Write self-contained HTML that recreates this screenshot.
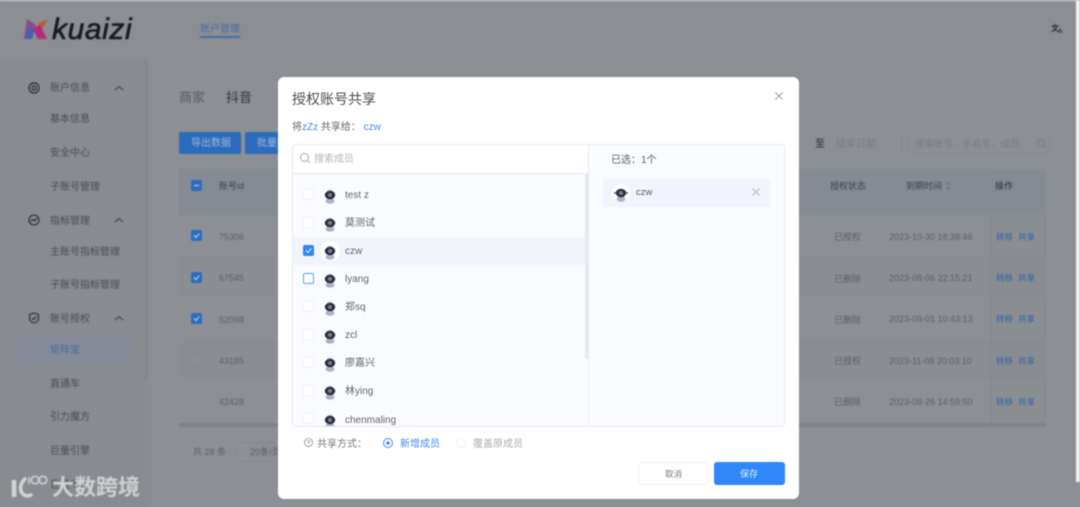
<!DOCTYPE html>
<html lang="zh"><head><meta charset="utf-8"><title>授权账号共享</title>
<style>
*{box-sizing:border-box}
html,body{margin:0;padding:0;width:1080px;height:507px;overflow:hidden;background:#8b8f93}
body{position:relative;font-family:"Liberation Sans","Noto Sans CJK SC",sans-serif}
.a{position:absolute}
.t{position:absolute;white-space:nowrap;line-height:14px;font-size:10px;color:#484c50}
#bg{position:absolute;left:0;top:0;width:1080px;height:507px;filter:blur(.7px)}
#dlg{position:absolute;left:278px;top:77px;width:521px;height:422px;background:#fff;border-radius:6px;filter:blur(.5px)}
#dlg .t{color:#62666c}
.cb{position:absolute;width:10px;height:10px;border:1px solid #868b8f;background:#8c9094;border-radius:2px}
.cbb{position:absolute;left:191px;width:11px;height:11px;background:#2b6cbd;border-radius:2px}
.op{color:#2e5fa8!important}
.g{color:#5a5e62!important}
.d .cb2{position:absolute;left:25px;width:11px;height:11px;border:1px solid #eef0f3;background:#fff;border-radius:2px}
svg{position:absolute;overflow:visible}
</style></head><body>
<div id="bg">
<div class="a" style="left:0;top:0;width:1080px;height:1px;background:#dfe0e1"></div>
<div class="a" style="left:1076px;top:0;width:4px;height:482px;background:#f2f2f2"></div>
<div class="a" style="left:0;top:59px;width:145px;height:448px;background:#888c90"></div>
<div class="a" style="left:145px;top:59px;width:3px;height:322px;background:#83878b"></div>
<div class="a" style="left:163px;top:73px;width:903px;height:434px;background:#8c9094;border-radius:8px"></div>

<!-- logo -->
<svg style="left:24px;top:18px" width="24" height="22" viewBox="0 0 24 22">
<path d="M3 1L12 7L10 13L0 21Z" fill="#8f4a86"/><path d="M0 21L4 9L11 11L8 21Z" fill="#4a5fb0"/><path d="M9 11L24 1L18 11L23 21L14 21Z" fill="#b52a7c"/><path d="M14 5L24 1L18 10Z" fill="#b8602e"/>
</svg>
<div class="t" style="left:52px;top:14px;line-height:32px;font-size:30px;font-style:italic;color:#16191d;letter-spacing:.6px;-webkit-text-stroke:.6px #16191d">kuaizi</div>

<div class="t" style="left:200px;top:23px;font-size:10px;color:#3f6cab">账户管理</div>
<div class="a" style="left:200px;top:36px;width:40px;height:2px;background:#3f6cab"></div>
<div class="t" style="left:1051px;top:22px;font-size:8px;color:#26292c;font-weight:bold">文<span style="font-size:6px;position:relative;top:2px;left:-1px">A</span></div>

<!-- sidebar -->
<svg style="left:28px;top:82px" width="12" height="12" viewBox="0 0 12 12" fill="none" stroke="#23262a"><circle cx="6" cy="6" r="5" stroke-width="1.2"/><circle cx="6" cy="6" r="2" stroke-width="1.2"/></svg>
<div class="t" style="left:50px;top:82px">账户信息</div>
<svg style="left:114px;top:85px" width="10" height="6" fill="none" stroke="#33373a"><path d="M1 5L5 1.5L9 5"/></svg>
<div class="t" style="left:50px;top:113px">基本信息</div>
<div class="t" style="left:50px;top:147px">安全中心</div>
<div class="t" style="left:50px;top:181px">子账号管理</div>
<svg style="left:28px;top:214px" width="12" height="12" viewBox="0 0 12 12" fill="none" stroke="#23262a" stroke-width="1.1"><circle cx="6" cy="6" r="5"/><path d="M3 7L5 5.5L6.5 6.8L9 4"/></svg>
<div class="t" style="left:50px;top:215px">指标管理</div>
<svg style="left:114px;top:217px" width="10" height="6" fill="none" stroke="#33373a"><path d="M1 5L5 1.5L9 5"/></svg>
<div class="t" style="left:50px;top:246px">主账号指标管理</div>
<div class="t" style="left:50px;top:279px">子账号指标管理</div>
<svg style="left:28px;top:312px" width="12" height="12" viewBox="0 0 12 12" fill="none" stroke="#23262a" stroke-width="1.1"><path d="M6 1L10.500 2.500V6.500C10.500 9 8 10.500 6 11C4 10.500 1.500 9 1.500 6.500V2.500Z"/><path d="M3.800 6L5.500 7.500L8.200 4.500"/></svg>
<div class="t" style="left:50px;top:313px">账号授权</div>
<svg style="left:114px;top:315px" width="10" height="6" fill="none" stroke="#33373a"><path d="M1 5L5 1.5L9 5"/></svg>
<div class="a" style="left:14px;top:334px;width:117px;height:31px;background:#858b96;border-radius:6px"></div>
<div class="t" style="left:50px;top:344px;color:#3f6cab">矩阵宝</div>
<div class="t" style="left:50px;top:378px">直通车</div>
<div class="t" style="left:50px;top:411px">引力魔方</div>
<div class="t" style="left:50px;top:445px">巨量引擎</div>
<div class="t" style="left:50px;top:479px">巨量千川</div>

<!-- content -->
<div class="t" style="left:179px;top:90px;font-size:13px;line-height:16px;color:#565a5e">商家</div>
<div class="t" style="left:226px;top:90px;font-size:13px;line-height:16px;color:#2e3135">抖音</div>
<div class="a" style="left:179px;top:132px;width:62px;height:22px;background:#2b6cbd;border-radius:2px"></div>
<div class="t" style="left:191px;top:137px;color:#a3b9d6">导出数据</div>
<div class="a" style="left:245px;top:132px;width:40px;height:22px;background:#2b6cbd;border-radius:2px"></div>
<div class="t" style="left:257px;top:137px;color:#a3b9d6">批量操作</div>
<div class="a" style="left:179px;top:169px;width:867px;height:46px;background:#858b93"></div>
<div class="cbb" style="top:180px"></div><div class="a" style="left:194px;top:185px;width:5px;height:1px;background:#cfe0f5"></div>
<div class="t" style="left:219px;top:179px;font-size:9px;color:#3d4145">账号id</div>
<div class="a" style="left:179px;top:256px;width:867px;height:41px;background:#8a8e92"></div>
<div class="a" style="left:179px;top:339px;width:867px;height:41px;background:#8a8e92"></div>
<div class="a" style="left:179px;top:423px;width:867px;height:4px;background:#7f8387"></div>
<svg style="left:191px;top:230px" width="11" height="11"><rect width="11" height="11" rx="2" fill="#2b6cbd"/><path d="M3 5.500L5 7.500L8.200 3.500" fill="none" stroke="#cfe0f5"/></svg>
<svg style="left:191px;top:272px" width="11" height="11"><rect width="11" height="11" rx="2" fill="#2b6cbd"/><path d="M3 5.500L5 7.500L8.200 3.500" fill="none" stroke="#cfe0f5"/></svg>
<svg style="left:191px;top:313px" width="11" height="11"><rect width="11" height="11" rx="2" fill="#2b6cbd"/><path d="M3 5.500L5 7.500L8.200 3.500" fill="none" stroke="#cfe0f5"/></svg>
<div class="cb" style="left:191px;top:355px"></div><div class="cb" style="left:191px;top:396px"></div>
<div class="t g" style="left:219px;top:230px;font-size:9px">75306</div>
<div class="t g" style="left:219px;top:271px;font-size:9px">67545</div>
<div class="t g" style="left:219px;top:313px;font-size:9px">52098</div>
<div class="t g" style="left:219px;top:354px;font-size:9px">43185</div>
<div class="t g" style="left:219px;top:395px;font-size:9px">42428</div>
<div class="t g" style="left:193px;top:445px;font-size:9px">共 28 条</div>
<div class="a" style="left:236px;top:442px;width:42px;height:20px;border:1px solid #85898d;border-radius:3px"></div>
<div class="t g" style="left:250px;top:445px;font-size:9px">20条/页</div>

<div class="t" style="left:815px;top:138px;font-size:10px;color:#23262a">至</div>
<div class="t" style="left:836px;top:138px;color:#777b7f">结束日期</div>
<div class="a" style="left:901px;top:133px;width:1px;height:20px;background:#84888c"></div>
<div class="a" style="left:908px;top:133px;width:141px;height:21px;border:1px solid #878b8f;border-radius:3px"></div>
<div class="t" style="left:915px;top:138px;font-size:9.500px;color:#777b7f">搜索账号、手机号、成员</div>
<svg style="left:1037px;top:139px" width="9" height="9" fill="none" stroke="#777b7f"><circle cx="4" cy="4" r="3.500"/><path d="M6.500 6.500L8.500 8.500"/></svg>

<div class="t" style="left:830px;top:179px;font-size:9px;color:#3d4145">授权状态</div>
<div class="t" style="left:906px;top:179px;font-size:9px;color:#3d4145">到期时间</div>
<svg style="left:945px;top:181px" width="7" height="10"><path d="M3.500 0L6.500 4H.5Z M3.500 10L6.500 6H.5Z" fill="#777b7f"/></svg>
<div class="a" style="left:990px;top:169px;width:56px;height:257px;background:rgba(130,134,140,.2);border-left:1px solid #85898d;border-right:1px solid #85898d;border-bottom:1px solid #85898d"></div>
<div class="t" style="left:995px;top:179px;font-size:9px;color:#2d3034">操作</div>

<div class="t g" style="left:834px;top:230px;font-size:9px">已授权</div><div class="t g" style="left:889px;top:230px;font-size:9px">2023-10-30 18:38:46</div>
<div class="t g" style="left:834px;top:272px;font-size:9px">已删除</div><div class="t g" style="left:889px;top:271px;font-size:9px">2023-08-06 22:15:21</div>
<div class="t g" style="left:834px;top:313px;font-size:9px">已删除</div><div class="t g" style="left:889px;top:312px;font-size:9px">2023-09-01 10:43:13</div>
<div class="t g" style="left:834px;top:354px;font-size:9px">已授权</div><div class="t g" style="left:889px;top:354px;font-size:9px">2023-11-08 20:03:10</div>
<div class="t g" style="left:834px;top:395px;font-size:9px">已删除</div><div class="t g" style="left:889px;top:395px;font-size:9px">2023-08-26 14:59:50</div>
<div class="t op" style="left:996px;top:230px;font-size:8.500px">转移</div><div class="t op" style="left:1018px;top:230px;font-size:8.500px">共享</div>
<div class="t op" style="left:996px;top:271px;font-size:8.500px">转移</div><div class="t op" style="left:1018px;top:271px;font-size:8.500px">共享</div>
<div class="t op" style="left:996px;top:312px;font-size:8.500px">转移</div><div class="t op" style="left:1018px;top:312px;font-size:8.500px">共享</div>
<div class="t op" style="left:996px;top:354px;font-size:8.500px">转移</div><div class="t op" style="left:1018px;top:354px;font-size:8.500px">共享</div>
<div class="t op" style="left:996px;top:395px;font-size:8.500px">转移</div><div class="t op" style="left:1018px;top:395px;font-size:8.500px">共享</div>

<!-- watermark -->
<svg style="left:9px;top:472px" width="42" height="28" viewBox="0 0 42 28" fill="none" stroke="#d3d4d5"><path d="M5 8V25" stroke-width="4.500"/><path d="M17 6C11 11 10 18 14 22C17 25 21 24 23 22" stroke-width="3.500"/><path d="M20 5V12" stroke-width="1.500"/><circle cx="26" cy="8" r="3.800" stroke-width="1.500"/><circle cx="34" cy="8" r="3.800" stroke-width="1.500"/></svg>
<div class="t" style="left:52px;top:476px;font-size:22px;line-height:24px;color:#d0d1d2;font-weight:bold">大数跨境</div>
</div>

<div id="dlg" class="d">
<div class="t" style="left:14px;top:14px;font-size:14px;line-height:17px;color:#4a4e54">授权账号共享</div>
<svg style="left:497px;top:15px" width="8" height="8" fill="none" stroke="#9a9da1"><path d="M.5 .5L7.500 7.500M7.500 .5L.5 7.500"/></svg>
<div class="t" style="left:14px;top:44px;font-size:10px">将<span style="color:#3f8bf0">zZz</span> 共享给： <span style="color:#3f8bf0">czw</span></div>

<div class="a" style="left:14px;top:67px;width:493px;height:283px;border:1px solid #e9ebef;border-radius:3px;background:#fafbfe"></div>
<div class="a" style="left:15px;top:68px;width:295px;height:29px;background:#fff;border-bottom:1px solid #e9ebef"></div>
<div class="a" style="left:310px;top:68px;width:1px;height:281px;background:#e9ebef"></div>
<div class="a" style="left:307px;top:97px;width:4px;height:185px;background:#e8e9ec"></div>
<svg style="left:22px;top:76px" width="10" height="10" fill="none" stroke="#a9acb0"><circle cx="4.500" cy="4.500" r="4"/><path d="M7.500 7.500L9.500 9.500"/></svg>
<div class="t" style="left:36px;top:76px;color:#b4b7bb">搜索成员</div>

<div class="a" style="left:15px;top:160px;width:292px;height:28px;background:#f1f4fb"></div>

<div class="cb2" style="top:112px"></div><div class="t" style="left:67px;top:112px">test z</div>
<div class="cb2" style="top:140px"></div><div class="t" style="left:67px;top:140px">莫测试</div>
<svg style="left:25px;top:168px" width="11" height="11"><rect width="11" height="11" rx="2" fill="#2f87f5"/><path d="M3 5.500L5 7.500L8.200 3.500" fill="none" stroke="#fff"/></svg>
<div class="t" style="left:67px;top:168px">czw</div>
<div class="cb2" style="top:196px;border-color:#5d9ff2"></div><div class="t" style="left:67px;top:196px">lyang</div>
<div class="cb2" style="top:224px"></div><div class="t" style="left:67px;top:224px">郑sq</div>
<div class="cb2" style="top:252px"></div><div class="t" style="left:67px;top:252px">zcl</div>
<div class="cb2" style="top:280px"></div><div class="t" style="left:67px;top:280px">廖嘉兴</div>
<div class="cb2" style="top:308px"></div><div class="t" style="left:67px;top:308px">林ying</div>
<div class="cb2" style="top:336px"></div><div class="t" style="left:67px;top:337px">chenmaling</div>

<!-- avatars -->
<svg style="left:0;top:0" width="521" height="350">
<defs>
<g id="av"><ellipse cx="0" cy="6" rx="4.500" ry="2.800" fill="#aeb4c8"/><ellipse cx="0" cy="-4" rx="3" ry="1.500" fill="#c9ccd6"/><ellipse cx="0" cy="0" rx="5.200" ry="4.300" fill="#2b2e3e"/><circle cx="0" cy="0" r="2" fill="#7a8098"/></g>
<clipPath id="c"><rect x="40" y="330" width="30" height="19"/></clipPath>
</defs>
<circle cx="52" cy="174" r="10" fill="#fff"/>
<use href="#av" x="52" y="118"/><use href="#av" x="52" y="146"/><use href="#av" x="52" y="174"/><use href="#av" x="52" y="202"/><use href="#av" x="52" y="230"/><use href="#av" x="52" y="258"/><use href="#av" x="52" y="286"/><use href="#av" x="52" y="314"/>
<g clip-path="url(#c)"><use href="#av" x="52" y="343"/></g>
</svg>

<div class="t" style="left:333px;top:77px;color:#5a5e64">已选：1个</div>
<div class="a" style="left:325px;top:102px;width:167px;height:28px;background:#f1f4fc"></div>
<svg style="left:333px;top:106px" width="20" height="20" viewBox="-10 -10 20 20"><circle r="9" fill="#fff"/><ellipse cx="0" cy="6" rx="4.500" ry="2.800" fill="#aeb4c8"/><ellipse cx="0" cy="0" rx="5.200" ry="4.300" fill="#2b2e3e"/><circle cx="0" cy="0" r="2" fill="#7a8098"/><rect x="-7" y="-1" width="1.500" height="2" fill="#5b72c0"/><rect x="5.500" y="-1" width="1.500" height="2" fill="#5b72c0"/></svg>
<div class="t" style="left:358px;top:109px;font-size:9.500px;color:#55595f">czw</div>
<svg style="left:474px;top:111px" width="8" height="8" fill="none" stroke="#b4b7bb"><path d="M.5 .5L7.500 7.500M7.500 .5L.5 7.500"/></svg>

<svg style="left:26px;top:361px" width="9" height="9" fill="none" stroke="#8c8f93" stroke-width=".8"><circle cx="4.500" cy="4.500" r="4"/><path d="M3.200 3.500Q4.500 2 5.800 3.500L4.500 5V6"/></svg>
<div class="t" style="left:39px;top:361px;color:#777b80">共享方式：</div>
<svg style="left:105px;top:361px" width="10" height="10" fill="none"><circle cx="5" cy="5" r="4.500" stroke="#3f8bf0"/><circle cx="5" cy="5" r="1.800" fill="#3f8bf0"/></svg>
<div class="t" style="left:122px;top:361px;color:#3f8bf0">新增成员</div>
<svg style="left:178px;top:361px" width="10" height="10" fill="none"><circle cx="5" cy="5" r="4.500" stroke="#eef0f2"/></svg>
<div class="t" style="left:195px;top:361px;color:#a9acb0">覆盖原成员</div>

<div class="a" style="left:360px;top:385px;width:70px;height:23px;border:1px solid #f0f1f3;border-radius:3px;background:#fff"></div>
<div class="t" style="left:387px;top:390px;font-size:8.500px;color:#777b80">取消</div>
<div class="a" style="left:436px;top:385px;width:71px;height:23px;border-radius:3px;background:#2f87f8"></div>
<div class="t" style="left:462px;top:390px;font-size:9px;color:#dcebff">保存</div>
</div>
</body></html>
